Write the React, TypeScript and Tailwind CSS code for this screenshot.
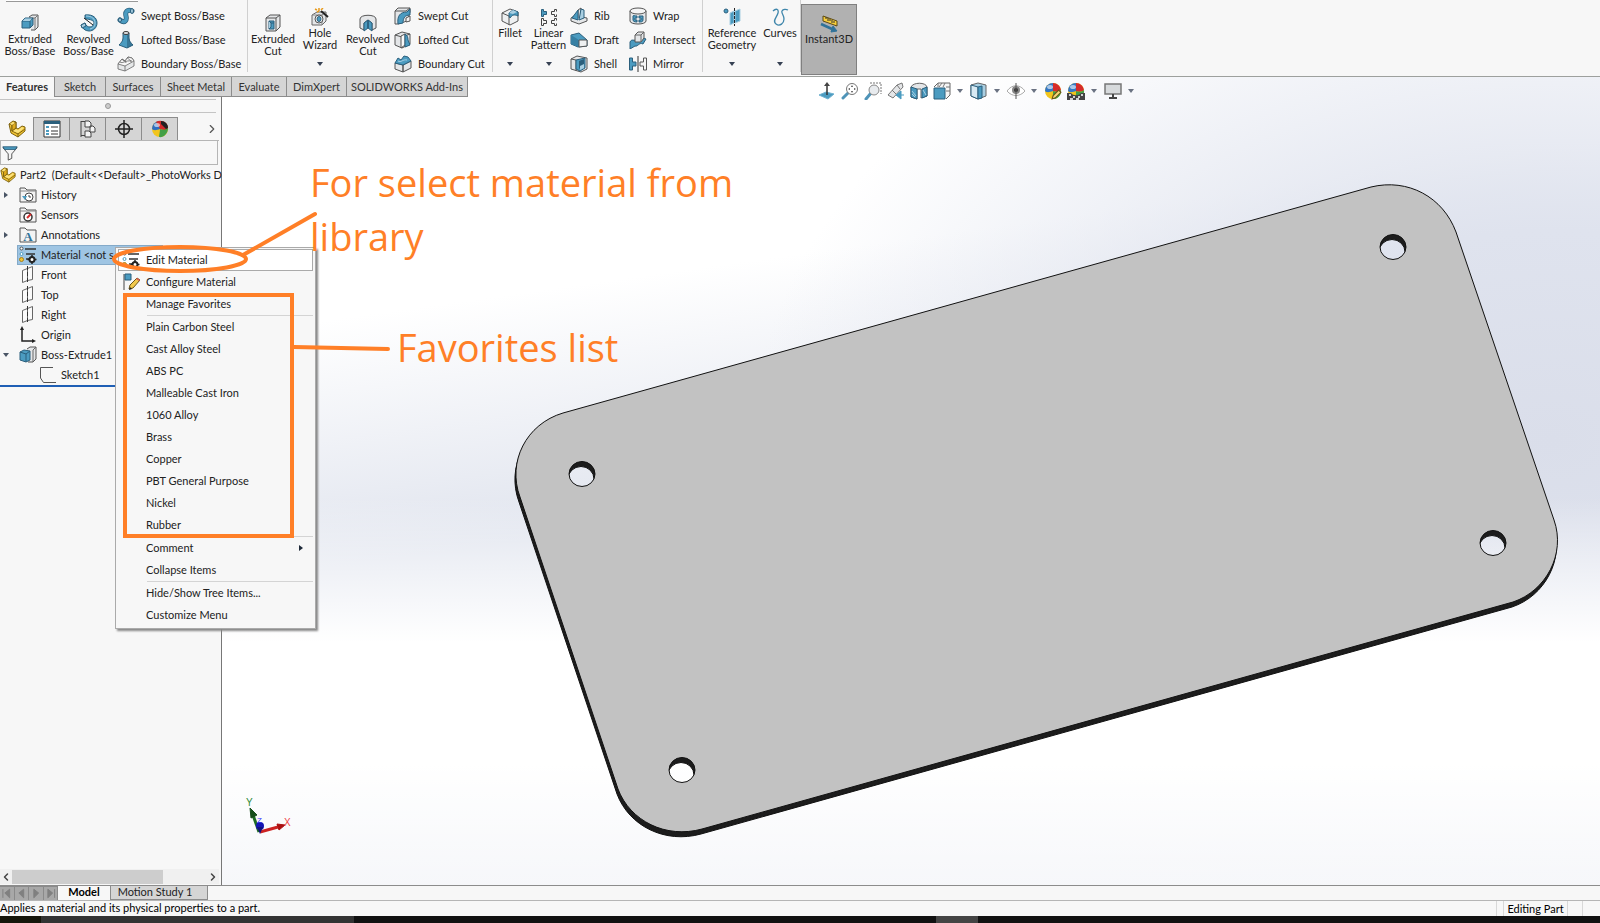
import type { ReactNode } from 'react';
import { ChevronLeft, ChevronRight } from 'lucide-react';

const B = '#4b9bc0';
const D = '#2b5f7c';
const K = '#3a3a3a';
const G = '#e4e6e8';
const C = '#a9cfe2';

/* All drawings share an 18 x 18 grid */
const icons: Record<string, ReactNode> = {
    extrude: (
        <g strokeWidth="1" strokeLinejoin="round">
            <path d="M8 3l3-2h6v12l-3 3h-4" fill={G} stroke="#555" />
            <path d="M14 4l3-3M14 4v12M8 4h6" fill="none" stroke="#777" />
            <path d="M1 7l3-3h8v7l-3 3H1z" fill={B} stroke={D} />
            <path d="M1 7h8v7M9 7l3-3" fill="none" stroke={D} />
            <path d="M1.500 7L4 4.500h7L9 7z" fill={C} />
        </g>
    ),
    revolve: (
        <g strokeLinejoin="round">
            <path d="M5 1c8-1 12 3 12 8s-4 8-8 8-7-3-8-6l4-2c1 3 3 4 5 4s4-2 4-4-3-4-9-4z" fill={B} stroke={D} />
            <path d="M6 2c6 0 9 3 9 7s-2 5-5 6" fill="none" stroke={C} />
            <path d="M4 4l9 7" stroke="#222" />
            <path d="M1 11l4-2 1 3-4 2z" fill={C} stroke={D} />
        </g>
    ),
    swept: (
        <g fill="none" strokeLinecap="round">
            <path d="M3 13c5 4 7 0 6-4s1-7 6-5" stroke={D} strokeWidth="5" />
            <path d="M3 13c5 4 7 0 6-4s1-7 6-5" stroke={B} strokeWidth="3.500" />
            <ellipse cx="15" cy="4" rx="1.500" ry="2.500" fill={C} stroke={D} />
            <ellipse cx="3" cy="13" rx="1.500" ry="2" fill={C} stroke={D} />
        </g>
    ),
    loft: (
        <g>
            <path d="M6 2h6v5c0 3 2 5 4 7l-6 3-8-3c2-2 4-4 4-7z" fill={B} stroke={D} />
            <path d="M10 2h2v5c0 3 2 5 4 7l-6 3z" fill={D} opacity=".6" />
            <ellipse cx="9" cy="2" rx="3" ry="1.500" fill={G} stroke={K} />
        </g>
    ),
    boundary: (
        <g stroke="#666" strokeLinejoin="round" strokeWidth=".8">
            <path d="M1 9l4-5 3 2 3-4 4 1 2 3v5l-9 5-7-2z" fill="#e6e8e9" />
            <path d="M1 9l7 2 9-5-2-3-4-1-3 4-3-2z" fill="#f6f6f6" />
            <path d="M8 11v5M5 4c1 3 4 1 4 4M11 2c-1 3 3 2 3 5M3 7c3 2 5-2 12-1" fill="none" />
        </g>
    ),
    cutExtrude: (
        <g stroke="#555" strokeLinejoin="round">
            <path d="M2 4l4-3h10v12l-4 4H2z" fill={G} />
            <path d="M2 4h10v13M12 4l4-3" fill="none" />
            <path d="M5 7h5v8H5z" fill={B} stroke={D} />
            <path d="M5 7l2 2v4l-2 2M7 9h3" fill={C} stroke={D} />
        </g>
    ),
    wizard: (
        <g strokeLinejoin="round">
            <path d="M1 7l5-3h9v9l-4 4H1z" fill={G} stroke="#666" />
            <path d="M1 7h10v10M11 7l4-3" fill="none" stroke="#888" />
            <ellipse cx="8" cy="11" rx="4" ry="4" fill="#f8f8f8" stroke="#555" />
            <ellipse cx="8" cy="11" rx="2" ry="2.500" fill={B} stroke={D} />
            <path d="M10 3l7 6" stroke="#222" strokeWidth="2" />
            <path d="M4 1l2 1M8 0v3M12 0l-2 2M6 4l2-1" stroke="#e89a1c" strokeWidth="1.500" />
        </g>
    ),
    cutRevolve: (
        <g stroke="#555" strokeLinejoin="round">
            <path d="M1 5c0-5 16-5 16 0v9l-4 2V9L9 6 5 9v7l-4-2z" fill={G} />
            <path d="M5 9l4-3v8l-4 3zM13 9L9 6v8l4 3z" fill={B} stroke={D} />
            <path d="M9 14V6" stroke={D} />
        </g>
    ),
    cutSwept: (
        <g stroke="#555" strokeLinejoin="round">
            <path d="M1 4l3-3h12v4l-3 9-9 3H1z" fill={G} />
            <path d="M4 17c-1-8 2-12 9-12l3-3v6c-5 0-7 3-7 8z" fill={B} stroke={D} />
            <path d="M1 4h11l4-3" fill="none" />
            <path d="M12 11l4-2v5l-4 1z" fill="#f4f4f4" />
        </g>
    ),
    cutLoft: (
        <g stroke="#555" strokeLinejoin="round">
            <path d="M1 4l7-3 8 2v10l-8 4-7-3z" fill={G} />
            <path d="M1 4l7 2v11M8 6l8-3" fill="none" />
            <path d="M7 5l4-2v11l-4 3z" fill="#f8f8f8" />
            <path d="M11 3c2 1 3 3 3 6l2 5-5 2z" fill={B} stroke={D} />
        </g>
    ),
    cutBoundary: (
        <g strokeLinejoin="round">
            <path d="M1 8l8 2v7l-8-3zM9 10l8-4v7l-8 4z" fill={G} stroke="#555" />
            <path d="M1 8l3-5 3 2 3-4 4 1 3 4-8 4z" fill={B} stroke={D} />
            <path d="M4 6c3 2 5-2 9-1" stroke={C} fill="none" />
        </g>
    ),
    fillet: (
        <g stroke="#555" strokeLinejoin="round">
            <path d="M1 5l8-4 8 3v9l-8 4-8-4z" fill="#eef0f1" />
            <path d="M1 5l7 3v9" fill="none" />
            <path d="M8 5l4-3 5 2v4c-4-2-6-1-8 2-1-1-1-3-1-5z" fill={B} stroke={D} />
            <path d="M8 5l4-3 4 2-4 2z" fill={C} stroke="none" />
        </g>
    ),
    linear: (
        <g fill="none" stroke="#444">
            <path d="M1.500 1.500h2v2h3v3h-3v2h-2z" fill={B} stroke={D} />
            <path d="M16.500 1.500h-2v2h-3v3h3v2h2M1.500 10.500h2v2h3v3h-3v2h-2zM16.500 10.500h-2v2h-3v3h3v2h2" />
            <path d="M16.500 1.500v2M16.500 6.500v2M16.500 10.500v2M16.500 15.500v2" />
        </g>
    ),
    rib: (
        <g stroke="#555" strokeLinejoin="round">
            <path d="M1 11l3-2 4 2V3l3-2v9l6 1v3l-8 3-8-3z" fill={G} />
            <path d="M8 3l-6 8 6 2z" fill={B} stroke={D} />
            <path d="M11 2l3 1v8l-5 2z" fill={C} stroke={D} />
        </g>
    ),
    draft: (
        <g strokeLinejoin="round">
            <path d="M1 4l8-2 8 7v6l-9 1-7-3z" fill={B} stroke={D} />
            <path d="M1 4l8 5v7l-8-3z" fill="#367fa3" />
            <path d="M9 9l8 0v6l-8 1z" fill="#eef0f1" stroke="#555" />
        </g>
    ),
    shell: (
        <g stroke="#555" strokeLinejoin="round">
            <path d="M1 4l6-3 10 2v11l-6 3-10-3z" fill={G} />
            <path d="M1 4l5 1v11" fill="none" />
            <path d="M6 5l9-2v10l-5 3-4-2z" fill={B} stroke={D} />
            <path d="M9 6l5-2v6l-5 4z" fill={D} stroke="none" />
            <path d="M10 11l4-2v4l-4 2z" fill={C} stroke="none" />
        </g>
    ),
    wrap: (
        <g stroke="#555">
            <path d="M1 4v10c0 4 16 4 16 0V4" fill={G} />
            <ellipse cx="9" cy="4" rx="8" ry="3" fill="#f5f5f5" />
            <path d="M4 9c0-1 2 0 4 0v2H6v2h2v2c-3 0-4-1-4-2zM10 9h4v4c0 2-2 2-4 2v-2h2v-2h-2z" fill={B} stroke={D} />
        </g>
    ),
    intersect: (
        <g strokeLinejoin="round">
            <path d="M1 11c2-4 4 0 7-3s6-1 9 0l-3 5c-4-2-5 3-8 2l-5 3z" fill={B} stroke={D} />
            <path d="M6 4l3-3h6v6l-3 4H6z" fill={G} stroke="#555" />
            <path d="M6 4h6v7M12 4l3-3" stroke="#666" fill="none" />
        </g>
    ),
    mirror: (
        <g>
            <path d="M.5 3h3v4H7v4H3.500v4h-3z" fill={B} stroke={D} />
            <path d="M17.500 3h-3v4H11v4h3.500v4h3z" fill="#f5f5f5" stroke="#555" />
            <path d="M9 1v16" stroke="#333" />
        </g>
    ),
    reference: (
        <g>
            <circle cx="3" cy="3" r="2" fill={B} stroke={D} />
            <path d="M7 5l4-2v12l-4 2zM12 3l5-2v12l-5 2z" fill={B} stroke={C} />
            <path d="M11.500 0v18" stroke="#222" strokeDasharray="3 1" />
        </g>
    ),
    curves: (
        <path d="M2 3c3-3 6-2 5 2s-6 8-2 11 8-1 8-5-3-6-2-8 4-2 6-1" fill="none" stroke="#3f86ab" strokeWidth="1.300" />
    ),
    instant: (
        <g strokeLinejoin="round">
            <path d="M3 1l14 5v5L3 6z" fill="#f7ce3b" stroke="#5c4a14" />
            <path d="M6 2v2M8 3v3M10 4v2M12 5v3M14 6v2" stroke="#333" />
            <path d="M1 9l11 5" stroke="#2f7299" strokeWidth="2.500" />
            <path d="M11 17l6-1-4-5z" fill="#2f7299" stroke="#2f7299" />
        </g>
    ),
    part: (
        <g stroke="#7d6210" strokeLinejoin="round">
            <path d="M1 4l4-3 3 1v6l2 1 4-3 3 1v4l-7 6-7-4z" fill="#f4c531" />
            <path d="M1 4l3 1 4-3M4 5v6l6 3 7-5M10 14v3M4 11l4-3" fill="none" />
            <path d="M4 5l4-3v6l-4 3z" fill="#e0ab1e" />
            <path d="M2 4l3-2 2 1-3 2zM5 11l3-2 2 1 4-3 2 1-6 5z" fill="#fbe27f" stroke="none" />
        </g>
    ),
    property: (
        <g>
            <path d="M1 1h16v16H1z" fill="#fff" stroke="#333" />
            <path d="M1 1h16v3H1z" fill={D} />
            <path d="M3 7h3M3 11h3M3 14h3" stroke={B} strokeWidth="2" />
            <path d="M8 7h7M8 11h7M8 14h7" stroke="#333" />
        </g>
    ),
    config: (
        <g fill="#f4f4f4" stroke="#444">
            <path d="M2 1v16M2 1.500h5M2 15.500h5" fill="none" />
            <path d="M6 1h4l2 2v4H6zM6 11h4l2 2v4H6zM11 6h3l2 2v4h-5z" />
        </g>
    ),
    target: (
        <g fill="none" stroke="#222" strokeWidth="1.500">
            <circle cx="9" cy="9" r="5.500" />
            <path d="M9 0v18M0 9h18" />
        </g>
    ),
    ball: (
        <g>
            <circle cx="9" cy="9" r="8" fill="#f2c51c" />
            <path d="M9 9V1a8 8 0 0 0-8 8c2 2 5 1 8 0z" fill="#3478c6" />
            <path d="M9 9V1a8 8 0 0 1 8 7c-2 2-5 2-8 1z" fill="#d52b2b" />
            <path d="M9 9c0 3 0 6-1 8a8 8 0 0 0 9-9c-2 2-5 2-8 1z" fill="#43a047" />
            <ellipse cx="6" cy="5" rx="3" ry="2" fill="#fff" opacity=".6" />
        </g>
    ),
    ballDark: (
        <g>
            <circle cx="9" cy="9" r="8" fill="#f2c51c" />
            <path d="M9 9V1a8 8 0 0 0-8 8c2 2 5 1 8 0z" fill="#2f6fc0" />
            <path d="M9 9L5 2c5-3 12 0 12 6-2 3-5 2-8 1z" fill="#d52b2b" />
            <path d="M9 9c0 3-1 6-1 8 4 1 9-3 9-9-2 2-5 2-8 1z" fill="#43a047" />
            <path d="M10 1c4 0 7 3 7 7l-2 1-5-5z" fill="#222" />
            <ellipse cx="6" cy="5" rx="3" ry="2" fill="#fff" opacity=".6" />
        </g>
    ),
    filter: (
        <g>
            <path d="M1 3l6 7v7l4-2v-5l6-7z" fill="#f5f5f5" stroke="#444" />
            <path d="M1 2h16l-2 3H3z" fill={B} stroke={D} />
        </g>
    ),
    history: (
        <g>
            <path d="M1 16V2h5l2 2h9v12z" fill="#f3f3f3" stroke="#555" />
            <path d="M1 5h16" stroke="#888" />
            <circle cx="10" cy="11" r="4" fill="#fff" stroke="#444" />
            <path d="M10 9v2h2" fill="none" stroke="#444" />
            <path d="M3 10h5l-2 4z" fill={B} />
        </g>
    ),
    sensor: (
        <g>
            <path d="M1 16V2h5l2 2h9v12z" fill="#f3f3f3" stroke="#555" />
            <path d="M1 5h16" stroke="#888" />
            <circle cx="9" cy="11" r="4" fill="#fff" stroke="#333" strokeWidth="1.500" />
            <path d="M8 12l4-4" stroke="#d52b2b" strokeWidth="2" />
        </g>
    ),
    annotation: (
        <g>
            <path d="M1 16V2h5l2 2h9v12z" fill="#f3f3f3" stroke="#555" />
            <text x="9" y="15" textAnchor="middle" fontFamily="Liberation Serif" fontSize="13" fontWeight="700" fill="#2f7299">A</text>
        </g>
    ),
    material: (
        <g>
            <path d="M6 3h11M7 8h9M7 13h3" stroke="#333" strokeWidth="1.500" />
            <circle cx="2.500" cy="2.500" r="1.500" fill="#fff" stroke="#555" />
            <circle cx="2.500" cy="8" r="1.500" fill="#fff" stroke={B} />
            <circle cx="2.500" cy="13.500" r="2" fill="#f4c531" stroke="#a8801a" />
            <circle cx="13" cy="13.500" r="2.500" fill="#fff" stroke="#222" strokeWidth="2" />
            <path d="M13 9v2M13 16v2M8.500 13.500h2M15.500 13.500h2" stroke="#222" strokeWidth="1.500" />
        </g>
    ),
    configure: (
        <g>
            <path d="M2 1v16" stroke="#444" />
            <path d="M3 1h6v6H3z" fill={B} stroke={D} />
            <path d="M7 16l1-4 7-7 3 2-7 8z" fill="#f2c94c" stroke="#6b5518" />
            <path d="M7 17l1-3 2 2z" fill="#222" />
            <path d="M14 6l1-1 3 2-1 1z" fill="#d55" />
        </g>
    ),
    plane: (
        <g>
            <path d="M3.500 4.500l5-2v12l-5 2zM8.500 2.500l5-2v13l-5 1" fill="#fafafa" stroke="#666" />
            <path d="M8.500 0v18" stroke="#333" strokeDasharray="4 2" />
        </g>
    ),
    origin: (
        <g stroke="#222" fill="#222">
            <path d="M3 3v12h11" fill="none" strokeWidth="1.500" />
            <path d="M3 0l2 4H1zM17 15l-4-2v4z" stroke="none" />
        </g>
    ),
    boss: (
        <g strokeLinejoin="round">
            <path d="M8 3l3-2h6v12l-3 3H9" fill={G} stroke="#555" />
            <path d="M14 4l3-3M14 4v12" fill="none" stroke="#666" />
            <path d="M1 6l4-2 6 1v9l-4 2-6-2z" fill={B} stroke={D} />
            <path d="M1 6l6 2v8M7 8l4-3" fill="none" stroke={D} />
        </g>
    ),
    sketch: <path d="M14 1.500H1.500V12l3 4.500H17" fill="none" stroke="#555" />,
    normal: (
        <g>
            <path d="M1 13l7-3 8 2-6 5z" fill={B} stroke="#6fb1d0" />
            <path d="M9 13V3" stroke="#333" strokeWidth="1.500" />
            <path d="M9 0l3 4H6z" fill="#444" />
        </g>
    ),
    zoomFit: (
        <g>
            <path d="M7 11l-5 5" stroke="#4f94b8" strokeWidth="3" strokeLinecap="round" />
            <circle cx="11" cy="7" r="5.500" fill="#fff" stroke="#777" />
            <path d="M11 3l1 2h-2zM11 11l1-2h-2zM7 7l2-1v2zM15 7l-2-1v2z" fill="#444" />
        </g>
    ),
    zoomArea: (
        <g>
            <path d="M6 1h11v11" fill="none" stroke="#777" strokeDasharray="2 1" />
            <path d="M7 11l-5 6" stroke="#4f94b8" strokeWidth="3" strokeLinecap="round" />
            <circle cx="10" cy="8" r="5" fill="#e8ebee" stroke="#888" />
        </g>
    ),
    previous: (
        <g>
            <path d="M1 13l9-10 5-2 1 4-10 11z" fill={G} stroke="#777" />
            <path d="M5 8l4 4M10 3l3 4" stroke="#777" />
            <path d="M17 13h-4M14 9v8l-5-4z" fill={B} stroke={B} />
        </g>
    ),
    section: (
        <g strokeLinejoin="round">
            <path d="M1 5c2-5 15-5 16 0v9l-6 2V7l-4 0v10l-6-2z" fill={G} stroke="#666" />
            <path d="M1 5l6 2v10l-6-2zM12 7l5-2v9l-5 2z" fill={B} stroke={D} />
            <path d="M2 9l4 5M2 12l3 3M13 8l3 5" stroke={C} />
        </g>
    ),
    orient: (
        <g>
            <path d="M1 5l4-4h12v12l-4 4" fill="#f5f5f5" stroke="#666" />
            <path d="M5 1v4M9 1l-3 4M17 5h-4M17 9h-4M12 1l-2 4" stroke="#777" />
            <path d="M1 6h11v11H1z" fill={B} stroke={D} />
        </g>
    ),
    display: (
        <g strokeLinejoin="round">
            <path d="M1 3l7-2 8 2v11l-8 3-7-3z" fill={C} stroke="#666" />
            <path d="M1 3l7 2v12l-7-3z" fill="#d8eaf3" stroke={D} />
            <path d="M8 5l4-1v12l-4 1z" fill={B} stroke={D} />
        </g>
    ),
    eye: (
        <g>
            <path d="M0 9c5-7 13-7 18 0-5 6-13 6-18 0z" fill="#fff" stroke="#aaa" />
            <circle cx="9" cy="8" r="4" fill="#888" />
            <circle cx="9" cy="8" r="2" fill="#333" />
            <path d="M9 1v16" stroke="#555" />
        </g>
    ),
    monitor: (
        <g>
            <path d="M1 2h16v10H1z" fill="#d7dadc" stroke="#777" strokeWidth="1.500" />
            <path d="M9 12v4M5 16h8" stroke="#444" strokeWidth="2" />
        </g>
    ),
};

function Icon({ name, className = 'w-[18px] h-[18px]' }: { name: string; className?: string }) {
    return (
        <svg viewBox="0 0 18 18" className={`${className} shrink-0`} aria-hidden="true">
            {icons[name]}
        </svg>
    );
}

function Caret({ className = 'text-gray-700' }: { className?: string }) {
    return (
        <svg viewBox="0 0 6 4" className={`w-[6px] h-[4px] shrink-0 ${className}`} aria-hidden="true">
            <path d="M0 0h6L3 4z" fill="currentColor" />
        </svg>
    );
}

function BigTool({ icon, lines, caret, width, low }: { icon: string; lines: string[]; caret?: boolean; width: string; low?: boolean }) {
    return (
        <button className={`flex flex-col items-center shrink-0 ${width} ${low ? 'pt-[14px]' : 'pt-2'}`}>
            <Icon name={icon} />
            <span className="flex flex-col items-center leading-3 h-7 pt-px whitespace-nowrap">
                {lines.map((line) => (
                    <span key={line}>{line}</span>
                ))}
            </span>
            {caret && <Caret className="text-gray-700 mt-2" />}
        </button>
    );
}

function ToolColumn({ items, width }: { items: [string, string][]; width: string }) {
    return (
        <div className={`flex flex-col pt-1 shrink-0 ${width}`}>
            {items.map(([icon, label]) => (
                <button key={label} className="flex items-center gap-[6px] h-6 shrink-0 whitespace-nowrap">
                    <Icon name={icon} />
                    {label}
                </button>
            ))}
        </div>
    );
}

function Ribbon() {
    return (
        <header className="relative flex h-[77px] shrink-0 bg-[#f7f7f7] border-b border-[#9da09d] overflow-hidden">
            <div className="absolute top-0 left-[6px] w-[132px] h-[2px] bg-white border-b border-[#999]" />
            <div className="flex w-[248px] shrink-0 border-r border-[#d0d0d0] mb-1">
                <BigTool icon="extrude" lines={['Extruded', 'Boss/Base']} width="w-[60px]" low />
                <BigTool icon="revolve" lines={['Revolved', 'Boss/Base']} width="w-[57px]" low />
                <ToolColumn
                    width="w-[130px]"
                    items={[['swept', 'Swept Boss/Base'], ['loft', 'Lofted Boss/Base'], ['boundary', 'Boundary Boss/Base']]}
                />
            </div>
            <div className="flex w-[245px] shrink-0 border-r border-[#d0d0d0] mb-1">
                <BigTool icon="cutExtrude" lines={['Extruded', 'Cut']} width="w-[50px]" low />
                <BigTool icon="wizard" lines={['Hole', 'Wizard']} width="w-[44px]" caret />
                <BigTool icon="cutRevolve" lines={['Revolved', 'Cut']} width="w-[52px]" low />
                <ToolColumn
                    width="w-[96px]"
                    items={[['cutSwept', 'Swept Cut'], ['cutLoft', 'Lofted Cut'], ['cutBoundary', 'Boundary Cut']]}
                />
            </div>
            <div className="flex w-[210px] shrink-0 border-r border-[#d0d0d0] mb-1">
                <BigTool icon="fillet" lines={['Fillet']} width="w-[34px]" caret />
                <BigTool icon="linear" lines={['Linear', 'Pattern']} width="w-[43px]" caret />
                <ToolColumn width="w-[59px]" items={[['rib', 'Rib'], ['draft', 'Draft'], ['shell', 'Shell']]} />
                <ToolColumn width="w-[70px]" items={[['wrap', 'Wrap'], ['intersect', 'Intersect'], ['mirror', 'Mirror']]} />
            </div>
            <div className="flex w-[98px] shrink-0 border-r border-[#d0d0d0] mb-1">
                <BigTool icon="reference" lines={['Reference', 'Geometry']} width="w-[58px]" caret />
                <BigTool icon="curves" lines={['Curves']} width="w-[38px]" caret />
            </div>
            <button
                className="flex flex-col items-center w-14 h-[71px] mt-1 pt-[10px] bg-[#b1b1b1] border border-[#808080] shrink-0"
                aria-pressed="true"
            >
                <Icon name="instant" />
                <span className="leading-3">Instant3D</span>
            </button>
        </header>
    );
}

const tabs: [string, string][] = [
    ['Sketch', 'w-[51px]'],
    ['Surfaces', 'w-[55px]'],
    ['Sheet Metal', 'w-[71px]'],
    ['Evaluate', 'w-[55px]'],
    ['DimXpert', 'w-[60px]'],
    ['SOLIDWORKS Add-Ins', 'w-[121px]'],
];

function CommandTabs() {
    return (
        <nav className="flex h-5 shrink-0">
            <button className="w-[55px] bg-[#f7f7f7] border-r border-[#8c8c8c] text-[#333] font-bold">Features</button>
            {tabs.map(([label, width]) => (
                <button
                    key={label}
                    className={`${width} pt-px bg-[#d5d5d5] border-r border-b border-[#8c8c8c] text-[#333] whitespace-nowrap`}
                >
                    {label}
                </button>
            ))}
        </nav>
    );
}

const viewTools: { icon: string; caret?: boolean }[] = [
    { icon: 'normal' },
    { icon: 'zoomFit' },
    { icon: 'zoomArea' },
    { icon: 'previous' },
    { icon: 'section' },
    { icon: 'orient', caret: true },
    { icon: 'display', caret: true },
    { icon: 'eye', caret: true },
    { icon: 'ball' },
    { icon: 'ball', caret: true },
    { icon: 'monitor', caret: true },
];

function ViewToolbar() {
    return (
        <div className="absolute top-[5px] left-[818px] flex gap-[5px]">
            {viewTools.map(({ icon, caret }, i) => (
                <button key={i} className="relative flex items-center gap-[6px]" aria-label={icon}>
                    <Icon name={icon} />
                    {i === 8 && (
                        <svg viewBox="0 0 10 10" className="absolute right-0 bottom-0 w-[11px] h-[11px]">
                            <path d="M1 9l1-3 5-5 2 2-5 5z" fill="#f7d774" stroke="#6b5518" />
                        </svg>
                    )}
                    {i === 9 && (
                        <svg viewBox="0 0 18 7" className="absolute left-0 bottom-0 w-[18px] h-[7px]">
                            <path d="M0 0h4c2 3 8 3 10 0h4v7H0z" fill="#444" />
                            <path d="M2 2h2M6 4h2M11 4h2M14 2h2M3 6h3M9 6h3" stroke="#fff" strokeWidth="1.500" />
                        </svg>
                    )}
                    {caret && <Caret className="text-gray-500 mr-[2px]" />}
                </button>
            ))}
        </div>
    );
}

const tree: { icon: string; label: string; arrow?: 'right' | 'down'; selected?: boolean; child?: boolean }[] = [
    { icon: 'history', label: 'History', arrow: 'right' },
    { icon: 'sensor', label: 'Sensors' },
    { icon: 'annotation', label: 'Annotations', arrow: 'right' },
    { icon: 'material', label: 'Material <not s', selected: true },
    { icon: 'plane', label: 'Front' },
    { icon: 'plane', label: 'Top' },
    { icon: 'plane', label: 'Right' },
    { icon: 'origin', label: 'Origin' },
    { icon: 'boss', label: 'Boss-Extrude1', arrow: 'down' },
    { icon: 'sketch', label: 'Sketch1', child: true },
];

function FeatureTree() {
    return (
        <aside className="flex flex-col w-[222px] flex-1 min-h-0 bg-[#f7f7f7] border-r border-[#777]">
            <div className="flex items-center justify-center h-[14px] mt-[2px] mr-[5px] border-y border-[#c4c4c4]">
                <span className="w-[6px] h-[6px] rounded-full border border-[#999] bg-[#ccc]" />
            </div>
            <div className="flex h-6 mt-1 mr-[2px] border-b border-[#b5b5b5]">
                <button className="flex items-center justify-center w-[34px] border-r border-[#8c8c8c]" aria-label="Feature tree">
                    <Icon name="part" />
                </button>
                {['property', 'config', 'target', 'ballDark'].map((icon) => (
                    <button
                        key={icon}
                        aria-label={icon}
                        className="flex items-center justify-center w-9 bg-[#d5d5d5] border-t border-r border-[#8c8c8c]"
                    >
                        <Icon name={icon} />
                    </button>
                ))}
                <button className="ml-auto text-[#555]" aria-label="More tabs">
                    <ChevronRight className="w-[14px] h-[14px]" />
                </button>
            </div>
            <label className="flex items-center h-[24px] mr-[3px] border border-[#b5b5b5] border-t-0 pl-px">
                <Icon name="filter" className="w-4 h-4" />
                <input aria-label="Filter" className="flex-1 min-w-0 bg-transparent outline-none px-1" />
            </label>
            <button className="flex items-center h-5 gap-1 shrink-0 whitespace-pre">
                <Icon name="part" className="w-4 h-4" />
                {'Part2  (Default<<Default>_PhotoWorks D'}
            </button>
            <ul className="border-b-2 border-[#1f5fb5]">
                {tree.map(({ icon, label, arrow, selected, child }) => (
                    <li key={label} className="flex items-center h-5">
                        <span className="flex items-center w-[17px] pl-[3px] shrink-0">
                            {arrow === 'right' && <Caret className="text-gray-600 -rotate-90" />}
                            {arrow === 'down' && <Caret className="text-gray-600" />}
                        </span>
                        <button
                            className={`flex items-center h-5 gap-1 pl-[2px] whitespace-nowrap ${child ? 'ml-5' : ''} ${
                                selected ? 'w-[146px] bg-[#9fc5e3] outline outline-[#84aac9] -outline-offset-1' : ''
                            }`}
                        >
                            <Icon name={icon} />
                            {label}
                        </button>
                    </li>
                ))}
            </ul>
            <div className="flex items-center h-[15px] mt-auto mb-px mr-[2px] bg-[#f0f0f0] text-[#444] shrink-0">
                <button aria-label="Scroll left">
                    <ChevronLeft className="w-3 h-3" strokeWidth={3} />
                </button>
                <span className="w-[151px] h-[14px] bg-[#cdcdcd]" />
                <button className="ml-auto" aria-label="Scroll right">
                    <ChevronRight className="w-3 h-3" strokeWidth={3} />
                </button>
            </div>
        </aside>
    );
}

function Separator() {
    return <hr className="ml-[29px] border-[#d4d4d4]" />;
}

function MenuItem({ label, icon, active, submenu }: { label: string; icon?: string; active?: boolean; submenu?: boolean }) {
    return (
        <button
            role="menuitem"
            className={`flex items-center w-full h-[22px] border text-left ${active ? 'bg-white border-[#aaa]' : 'border-transparent'}`}
        >
            <span className="w-[27px] pl-[3px] shrink-0">{icon && <Icon name={icon} />}</span>
            {label}
            {submenu && <Caret className="text-gray-800 -rotate-90 ml-auto mr-2" />}
        </button>
    );
}

const favorites = [
    'Plain Carbon Steel',
    'Cast Alloy Steel',
    'ABS PC',
    'Malleable Cast Iron',
    '1060 Alloy',
    'Brass',
    'Copper',
    'PBT General Purpose',
    'Nickel',
    'Rubber',
];

function ContextMenu() {
    return (
        <div
            role="menu"
            className="absolute top-[170px] left-[115px] w-[201px] p-[2px] pt-px bg-[#f7f7f7] border border-[#aaa] shadow-[2px_2px_2px_#888]"
        >
            <MenuItem label="Edit Material" icon="material" active />
            <MenuItem label="Configure Material" icon="configure" />
            <MenuItem label="Manage Favorites" />
            <Separator />
            {favorites.map((name) => (
                <MenuItem key={name} label={name} />
            ))}
            <Separator />
            <MenuItem label="Comment" submenu />
            <MenuItem label="Collapse Items" />
            <Separator />
            <MenuItem label="Hide/Show Tree Items..." />
            <MenuItem label="Customize Menu" />
        </div>
    );
}

const plate =
    'M563 413L1371 187C1408 178 1443 197 1456 232L1554 520C1566 554 1546 591 1513 602L702 829C666 839 630 821 618 789L520 497C507 462 526 424 563 413Z';
const holes = [
    [582, 474],
    [1393, 247],
    [1493, 543],
    [682, 770],
]
    .map(([x, y]) => `M${x - 13} ${y}a13 12.500 0 1 0 26 0a13 12.500 0 1 0 -26 0Z`)
    .join('');

function Model() {
    return (
        <svg viewBox="0 77 1600 808" className="absolute inset-0 w-full h-full" aria-label="Plate with four holes">
            <g fillRule="evenodd" stroke="#111">
                <path d={plate + holes} fill="#1c1c1c" transform="translate(-1 5)" />
                <path d={plate + holes} fill="#c2c2c2" />
            </g>
            <g strokeWidth="3">
                <path d="M259 832l-6-17" stroke="#1d6b23" />
                <path d="M250 808l7 7-6 3z" fill="#174f1b" stroke="#174f1b" strokeWidth="1" />
                <path d="M260 832l18-5" stroke="#c22" />
                <path d="M285 825l-8-1 2 6z" fill="#a11" stroke="#a11" strokeWidth="1" />
                <circle cx="260" cy="826" r="4" fill="#1414b4" />
                <path d="M257 827l6 0-3 7z" fill="#11117c" />
            </g>
            <g fontFamily="Liberation Sans" fontSize="10">
                <text x="246" y="806" fill="#2e8b34">Y</text>
                <text x="284" y="826" fill="#e44">X</text>
                <text x="257" y="823" fill="#33f" fontSize="8">Z</text>
            </g>
        </svg>
    );
}

function Markup() {
    return (
        <div className="absolute top-0 left-0 w-[780px] h-[560px] pointer-events-none text-[#ff7f27] text-[38px] leading-[54px] font-['Open_Sans',sans-serif]">
            <p className="absolute top-[78px] left-[310px] whitespace-nowrap">
                For select material from
                <br />
                library
            </p>
            <p className="absolute top-[243px] left-[397px] whitespace-nowrap">Favorites list</p>
            <svg viewBox="0 0 780 560" className="absolute inset-0 w-full h-full" fill="none" stroke="currentColor" strokeWidth="4">
                <rect x="125" y="218" width="167" height="241" />
                <ellipse cx="180" cy="182" rx="66" ry="12" />
                <path d="M243 178l72-41M294 270l94 2" strokeLinecap="round" />
            </svg>
        </div>
    );
}

function BottomTabs() {
    return (
        <div className="flex h-[15px] shrink-0 bg-[#f7f7f7] border-t border-[#8c8c8c]">
            <div className="flex w-[58px] bg-[#a8a8a8] text-[#808080]">
                {['M3 2v9M10 2L5 6l5 5z', 'M9 2L4 6l5 5z', 'M5 2l5 4-5 5z', 'M4 2l5 4-5 5zM11 2v9'].map((d) => (
                    <button key={d} className="flex-1 border-r border-t border-[#8a8a8a]" aria-label="Scroll tabs">
                        <svg viewBox="0 0 14 13" className="w-full h-[13px]">
                            <path d={d} fill="currentColor" stroke="currentColor" />
                        </svg>
                    </button>
                ))}
            </div>
            <button className="w-[52px] pb-[3px] leading-[11px] font-bold text-black">Model</button>
            <button className="w-[98px] pb-[2px] leading-[11px] bg-[#d5d5d5] border-x border-b border-[#8c8c8c] pr-2">
                Motion Study 1
            </button>
        </div>
    );
}

function StatusBar() {
    return (
        <footer className="flex items-center h-4 shrink-0 bg-[#f7f7f7] border-t border-[#b5b5b5] text-black">
            <span>Applies a material and its physical properties to a part.</span>
            <span className="w-2 h-full ml-auto border-x border-[#d8d8d8]" />
            <span className="w-16 h-full leading-[15px] text-center border-r border-[#d8d8d8]">Editing Part</span>
            <span className="w-[15px] h-full border-r border-[#d8d8d8]" />
            <span className="w-[17px]" />
        </footer>
    );
}

export default function App() {
    return (
        <div className="flex flex-col h-screen overflow-hidden text-[11px] text-[#222] font-[Lato,'Noto_Sans',sans-serif]">
            <Ribbon />
            <main className="relative flex flex-col flex-1 min-h-0 bg-white bg-[linear-gradient(180deg,transparent_52%,#ffffff_70%,#ffffff_85%,#ffffffb0),radial-gradient(ellipse_50%_65%_at_97%_45%,#dadeea,#dfe3ee_40%,transparent),linear-gradient(172deg,#ffffff_28%,#e0e4ee_52%,#e4e7f0)]">
                <Model />
                <div className="relative flex flex-col flex-1 min-h-0">
                    <CommandTabs />
                    <FeatureTree />
                </div>
                <ViewToolbar />
                <ContextMenu />
                <Markup />
            </main>
            <BottomTabs />
            <StatusBar />
            <div className="flex h-[7px] shrink-0 bg-[#111]">
                <span className="w-[41px] bg-[#15150a]" />
                <span className="w-[313px] bg-[#333]" />
                <span className="w-[582px]" />
                <span className="w-[42px] bg-[#444]" />
            </div>
        </div>
    );
}
